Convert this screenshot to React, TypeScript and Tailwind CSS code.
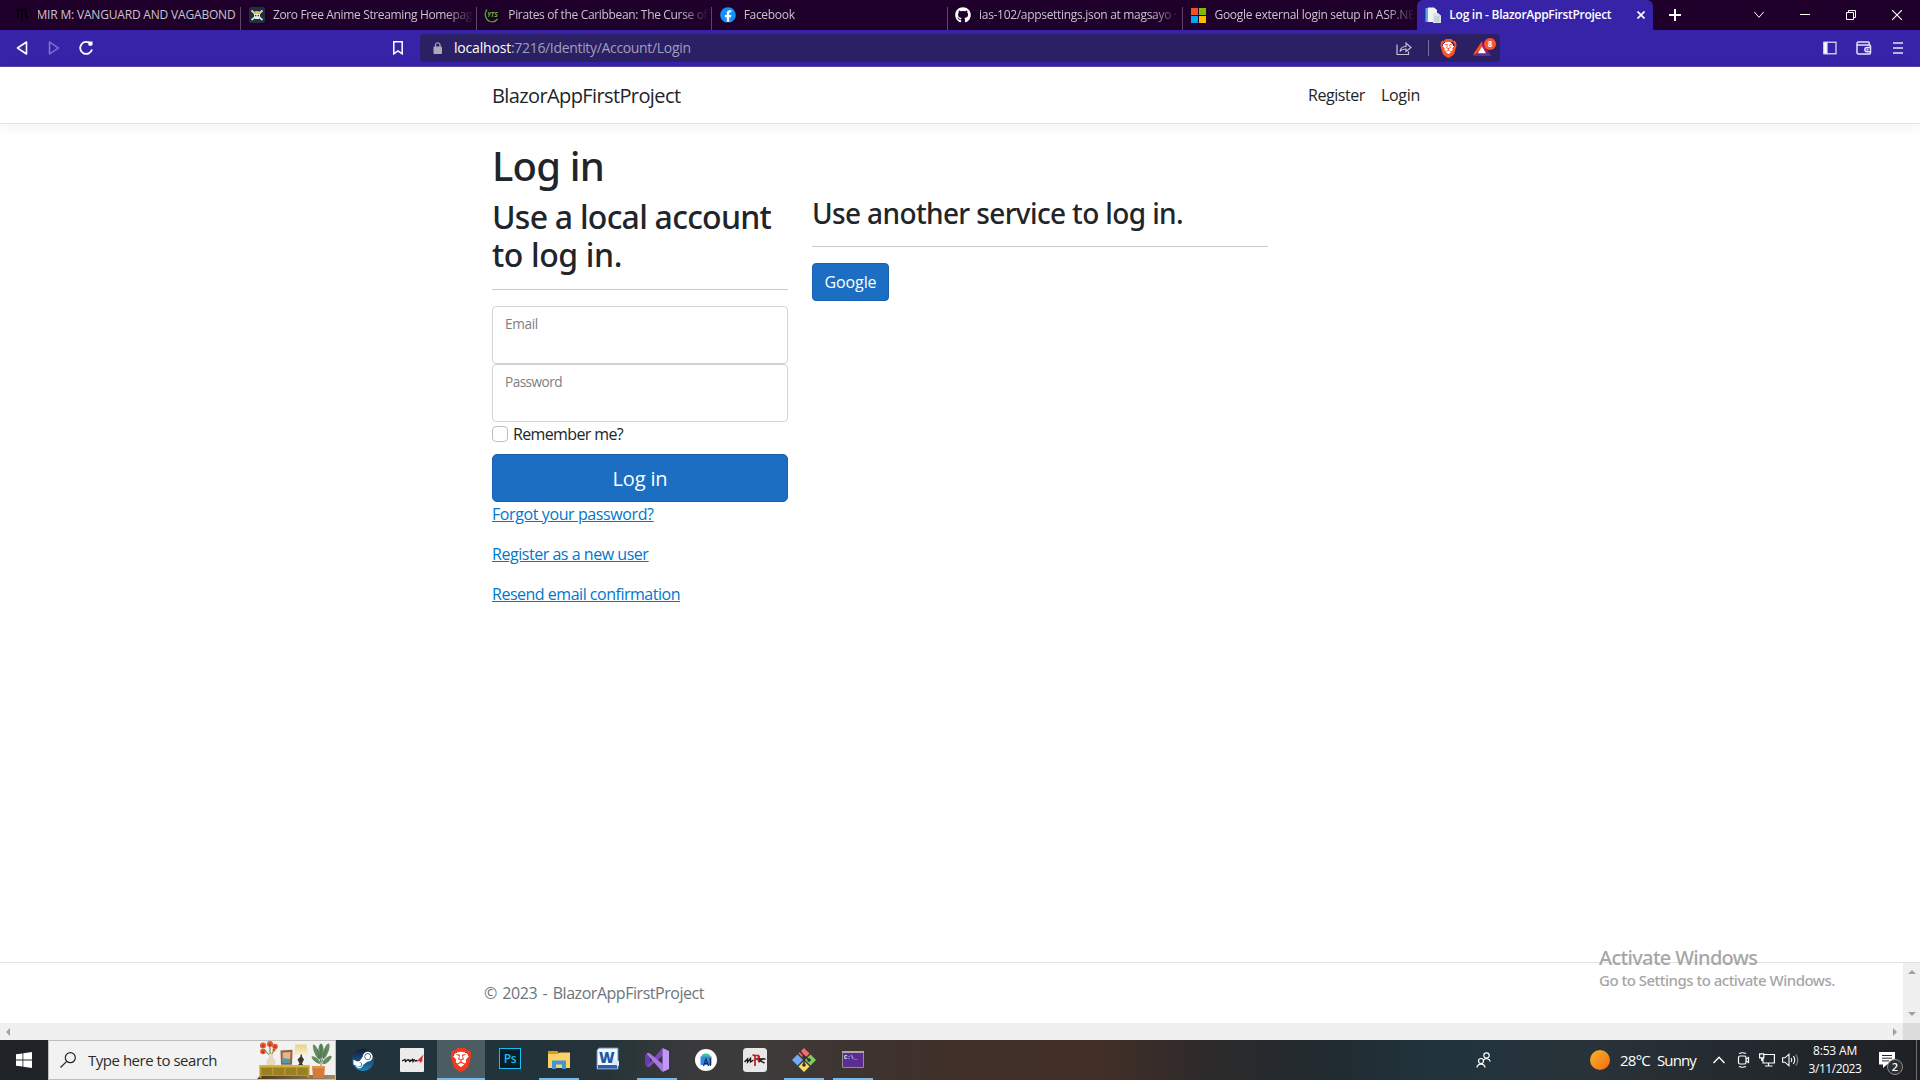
import type { ReactNode } from 'react';
import { FaFacebook, FaGithub, FaSteamSymbol } from 'react-icons/fa';
import { SiBrave } from 'react-icons/si';

const fade = '[mask-image:linear-gradient(to_right,black_86%,transparent)]';

function Tab({ icon, title, track, faded = true }: { icon: ReactNode; title: string; track: string; faded?: boolean }) {
  return (
    <div className="flex h-full w-[235.4px] shrink-0 items-center border-r border-transparent">
      <div className="flex h-4 w-4 shrink-0 items-center justify-center ml-[7.5px]">{icon}</div>
      <div className={`ml-2 w-[201px] overflow-hidden whitespace-nowrap text-[12px] leading-[18px] text-[#c9c2cb] ${track} ${faded ? fade : ''}`}>
        {title}
      </div>
    </div>
  );
}

function TabDivider() {
  return <div className="-ml-px mt-[7px] h-[23px] w-px shrink-0 bg-[#5c4766]" />;
}

function TabBar() {
  return (
    <div className="flex h-[30px] shrink-0 bg-[#1e002a] pl-[6px]">
      <Tab
        faded={false}
        track="tracking-[-0.0153em] -indent-px"
        title="MIR M: VANGUARD AND VAGABOND"
        icon={
          <svg viewBox="0 0 16 16" className="h-4 w-4" fill="none" stroke="#08000c" strokeWidth="2">
            <path d="M2.500 2.500c1 0 1.500 .5 1.500 1.500v7M4 4c1-2 4-2 4 0v10M8 4c1-2 4-2 4 0v6l2 1" />
          </svg>
        }
      />
      <TabDivider />
      <Tab
        track="tracking-[-0.0296em]"
        title="Zoro Free Anime Streaming Homepage"
        icon={
          <svg viewBox="0 0 16 16" className="h-4 w-4">
            <rect width="16" height="16" rx="2.500" fill="#1f3040" />
            <path d="M2.500 3.500l11 9.500M13.500 3.500l-11 9.500" stroke="#d9dde0" strokeWidth="1.700" />
            <path d="M5 7h6v3l-1 2H6l-1-2z" fill="#e8e8e4" />
            <path d="M3.800 7q.7-3 4.200-3t4.200 3z" fill="#e3c43a" />
            <path d="M6 8h1.300v1.300H6zM8.700 8H10v1.300H8.700z" fill="#1f3040" />
          </svg>
        }
      />
      <TabDivider />
      <Tab
        track="tracking-[-0.0283em]"
        title="Pirates of the Caribbean: The Curse of the"
        icon={
          <svg viewBox="0 0 16 16" className="h-4 w-4" fill="none">
            <path d="M3 2.500C0 6 1 12.500 6 14.500c3 1 6-.5 7.500-2.500" stroke="#5aa02c" strokeWidth="1.300" />
            <text x="3.200" y="10" fontSize="6.500" fontStyle="italic" fontWeight="700" fill="#6ab232" fontFamily="Open Sans, sans-serif">YTS</text>
          </svg>
        }
      />
      <TabDivider />
      <Tab
        track="tracking-[-0.0254em]"
        title="Facebook"
        icon={
          <span className="flex h-4 w-4 items-center justify-center rounded-full bg-[radial-gradient(white_60%,transparent_61%)]">
            <FaFacebook className="h-4 w-4 text-[#1590f5]" />
          </span>
        }
      />
      <TabDivider />
      <Tab track="tracking-[-0.0258em]" title="ias-102/appsettings.json at magsayo · " icon={<FaGithub className="h-4 w-4 text-white" />} />
      <TabDivider />
      <Tab
        track="tracking-[-0.0231em]"
        title="Google external login setup in ASP.NET"
        icon={
          <div className="grid h-[15px] w-[15px] grid-cols-2 gap-px">
            <div className="bg-[#f25022]" />
            <div className="bg-[#7fba00]" />
            <div className="bg-[#00a4ef]" />
            <div className="bg-[#ffb900]" />
          </div>
        }
      />
      <div className="-ml-px flex h-full w-[236px] shrink-0 items-center rounded-t-md bg-[#3623a8]">
        <svg viewBox="0 0 16 16" className="ml-[8px] h-4 w-4">
          <path d="M.5 1h4v14h-4z" fill="#4fb0d8" />
          <path d="M3 .500h6l3 2.500v12H3z" fill="#eef4f6" />
          <path d="M8 6h5l3 2.500V16H8z" fill="#d9e2e6" />
          <path d="M9.500 10h5M9.500 12h5M9.500 14h5" stroke="#a3b1b9" strokeWidth=".7" />
        </svg>
        <div className="ml-2 w-[186px] whitespace-nowrap text-[12px] font-semibold leading-[18px] tracking-[-0.0233em] text-white">
          Log in - BlazorAppFirstProject
        </div>
        <svg viewBox="0 0 8 8" className="ml-[2px] h-2 w-2" stroke="white" strokeWidth="1.700">
          <path d="M.5.5l7 7M7.500.5l-7 7" />
        </svg>
      </div>
      <div className="flex flex-1 items-center justify-between">
        <svg viewBox="0 0 12 12" className="ml-[16px] h-3 w-3" stroke="white" strokeWidth="2">
          <path d="M6 0v12M0 6h12" />
        </svg>
        <div className="flex items-center gap-[36px] pr-[18px]">
          <svg viewBox="0 0 10 10" className="h-[10px] w-[10px]" fill="none" stroke="white">
            <path d="M.2 1.800L5 7.300l4.800-5.500" />
          </svg>
          <svg viewBox="0 0 10 10" className="h-[10px] w-[10px]" stroke="white">
            <path d="M0 4.500h10" />
          </svg>
          <svg viewBox="0 0 10 10" className="h-[10px] w-[10px]" fill="none" stroke="white">
            <path d="M.5 2.500h7v7h-7zM2.500 2.500v-2h7v7h-2" />
          </svg>
          <svg viewBox="0 0 10 10" className="h-[10px] w-[10px]" stroke="white" strokeWidth="1.100">
            <path d="M0 0l10 10M10 0L0 10" />
          </svg>
        </div>
      </div>
    </div>
  );
}

function Toolbar() {
  return (
    <div className="flex h-[37px] shrink-0 items-center border-b border-[#5b3fae] bg-[#3623a8]">
      <svg viewBox="0 0 12 16" className="ml-[16px] h-4 w-3" fill="none" stroke="white" strokeWidth="1.600" strokeLinejoin="round">
        <path d="M10.500 2v12L1.500 8z" />
      </svg>
      <svg viewBox="0 0 12 16" className="ml-[20px] h-4 w-3" fill="none" stroke="#8478cb" strokeWidth="1.500" strokeLinejoin="round">
        <path d="M1.500 2v12l9-6z" />
      </svg>
      <svg viewBox="0 0 16 16" className="ml-[18px] h-4 w-4" fill="none" stroke="white" strokeWidth="1.800">
        <path d="M12.500 3.700A6 6 0 1 0 14 9.500" />
        <path d="M10 1.500h4.500v4z" fill="white" stroke="none" />
        <circle cx="12.200" cy="4" r="2" fill="white" stroke="none" />
      </svg>
      <svg viewBox="0 0 10 14" className="ml-[299px] h-[14px] w-[10px]" fill="none" stroke="white" strokeWidth="1.500">
        <path d="M.8.800h8.400v12L5 9.800.8 12.800z" />
      </svg>
      <div className="ml-[17px] flex h-7 w-[1080px] items-center rounded bg-[#2a2063]">
        <svg viewBox="0 0 10 12" className="ml-[13px] h-3 w-[10px]">
          <rect x=".5" y="4.500" width="8.500" height="7.500" rx="1" fill="#aba9b8" />
          <path d="M2.500 5V3a2.250 2.250 0 0 1 4.500 0v2" fill="none" stroke="#aba9b8" strokeWidth="1.200" />
        </svg>
        <div className="ml-[11px] flex-1 whitespace-nowrap text-[14px] leading-5">
          <span className="tracking-[-0.0131em] text-white">localhost</span>
          <span className="tracking-[-0.0235em] text-[#a19dbb]">:7216/Identity/Account/Login</span>
        </div>
        <svg viewBox="0 0 16 14" className="h-[14px] w-4" fill="none" stroke="#c4c1d4" strokeWidth="1.200">
          <path d="M1 3.500v10h11.500V10.500M4 10.500c.5-3.500 2.500-5 6-5V2l5 4.500-5 4V8c-3 0-4.500.5-6 2.500z" />
        </svg>
        <div className="ml-[16px] h-4 w-px bg-[#77729c]" />
        <div className="ml-[11px] flex h-[18px] w-4 items-center justify-center bg-[radial-gradient(white_50%,transparent_51%)]">
          <SiBrave className="h-[19px] w-[19px] shrink-0 text-[#fb542b]" />
        </div>
        <div className="relative ml-[17px] mr-[9px] h-[18px] w-[18px]">
          <svg viewBox="0 0 18 18" className="h-[18px] w-[18px]">
            <path d="M9 2v8l-3.500 5.500H0z" fill="#ff4724" />
            <path d="M9 2l9 15-5-1.500L9 9z" fill="#9e1f63" />
            <path d="M0 17l4.500-3.500h9L18 17z" fill="#662d91" />
            <path d="M9 7.500l4 6.800H5z" fill="#fff" />
          </svg>
          <span className="absolute -top-[1px] left-[11px] flex h-3 w-3 items-center justify-center rounded-full bg-[#fb542b] text-[8px] font-bold leading-none text-white">8</span>
        </div>
      </div>
      <div className="flex flex-1 items-center justify-end pr-[17px]">
        <svg viewBox="0 0 14 14" className="h-[14px] w-[14px]" fill="none" stroke="#e6e3f5" strokeWidth="1.200">
          <rect x="1" y="1.200" width="12" height="11.600" />
          <path d="M1 1.500h3v11H1z" fill="white" />
        </svg>
        <svg viewBox="0 0 16 14" className="ml-[19px] h-[14px] w-4" fill="none" stroke="#e6e3f5" strokeWidth="1.500">
          <path d="M13.200 3.500V2a1 1 0 0 0-1-1H2.500A1.500 1.500 0 0 0 1 2.500v8.800A1.500 1.500 0 0 0 2.500 13h11a1 1 0 0 0 1-1V5a1 1 0 0 0-1-1H1.500" />
          <path d="M14.500 6.500h-3.500a2 2 0 0 0 0 4.200h3.500" />
          <circle cx="11.500" cy="8.600" r=".4" fill="#fff" />
        </svg>
        <svg viewBox="0 0 10 14" className="ml-[21px] h-[14px] w-[10px]" stroke="#e6e3f5" strokeWidth="1.600">
          <path d="M0 2h10M0 7h10M0 12h10" />
        </svg>
      </div>
    </div>
  );
}

function Field({ label, track }: { label: string; track: string }) {
  return (
    <div className="h-[58px] rounded border border-[#ced4da] bg-white px-3 pt-[7px]">
      <span className={`block text-[13.6px] leading-5 text-[#7c8083] ${track}`}>{label}</span>
    </div>
  );
}

function Page() {
  return (
    <div className="flex flex-1 flex-col bg-white text-[#212529]">
      <nav className="flex h-[57px] shrink-0 items-center border-b border-[#dee2e6] pl-[492px] shadow-[0_4px_12px_rgba(0,0,0,0.05)]">
        <span className="pt-[2px] text-[20px] leading-[30px] tracking-[-0.0305em]">BlazorAppFirstProject</span>
        <div className="ml-auto flex gap-4 pr-[500px] text-[16px] leading-6">
          <span className="tracking-[-0.0269em]">Register</span>
          <span className="tracking-[-0.0189em]">Login</span>
        </div>
      </nav>
      <main className="flex-1 pl-[492px] pt-4">
        <h1 className="h-14 pt-[2px] font-['Noto_Sans',sans-serif] text-[40px] font-medium leading-[48px] tracking-[-0.0204em]">Log in</h1>
        <div className="flex gap-6">
          <section className="w-[296px]">
            <h2 className="pt-[2px] font-['Noto_Sans',sans-serif] text-[32px] font-medium leading-[38.4px]">
              <span className="block tracking-[-0.0235em]">Use a local account</span>
              <span className="block tracking-[-0.0122em]">to log in.</span>
            </h2>
            <hr className="mb-4 mt-[14px] border-[#c8c9ca]" />
            <Field label="Email" track="tracking-[-0.0230em]" />
            <Field label="Password" track="tracking-[-0.0393em]" />
            <div className="flex h-6">
              <span className="mt-1 h-4 w-4 rounded border border-[#bfbfbf]" />
              <span className="ml-[5px] text-[16px] leading-6 tracking-[-0.0398em]">Remember me?</span>
            </div>
            <button className="mt-2 block h-12 w-full rounded-[5px] border border-[#1861ac] bg-[#1b6ec2] pt-[3px] text-[20px] leading-[30px] tracking-[-0.007em] text-white">
              Log in
            </button>
            <div className="flex flex-col gap-4 text-[16px] leading-6 text-[#0077cc] underline">
              <a className="tracking-[-0.0250em]">Forgot your password?</a>
              <a className="tracking-[-0.0290em]">Register as a new user</a>
              <a className="tracking-[-0.0302em]">Resend email confirmation</a>
            </div>
          </section>
          <section className="w-[456px]">
            <h3 className="pt-px font-['Noto_Sans',sans-serif] text-[28px] font-medium leading-[33.6px] tracking-[-0.0225em]">Use another service to log in.</h3>
            <hr className="mb-4 mt-[15px] border-[#c8c9ca]" />
            <button className="block h-[38px] w-[77px] rounded border border-[#1861ac] bg-[#1b6ec2] text-[16px] leading-6 tracking-[-0.0062em] text-white">
              Google
            </button>
          </section>
        </div>
      </main>
      <footer className="flex h-[61px] shrink-0 border-t border-[#dee2e6]">
        <div className="flex-1 pl-[484px] text-[16px] leading-[60px] tracking-[-0.0290em] text-[#6c757d] [word-spacing:1.8px]">© 2023 - BlazorAppFirstProject</div>
        <div className="flex w-[17px] flex-col items-center justify-between bg-[#f0f0f0] py-[7px]">
          <svg viewBox="0 0 8 4" className="h-1 w-2" fill="#a0a0a0"><path d="M4 0l4 4H0z" /></svg>
          <svg viewBox="0 0 8 4" className="h-1 w-2" fill="#a0a0a0"><path d="M4 4l4-4H0z" /></svg>
        </div>
      </footer>
      <div className="flex h-[17px] shrink-0 items-center bg-[#f0f0f0]">
        <svg viewBox="0 0 4 8" className="ml-[6px] h-2 w-1" fill="#a0a0a0"><path d="M0 4l4-4v8z" /></svg>
        <svg viewBox="0 0 4 8" className="ml-auto mr-[6px] h-2 w-1" fill="#a0a0a0"><path d="M4 4L0 0v8z" /></svg>
        <div className="h-full w-[17px] bg-[#dcdcdc]" />
      </div>
    </div>
  );
}

function TaskButton({ children, open = false, active = false }: { children?: ReactNode; open?: boolean; active?: boolean }) {
  return (
    <div className={`flex h-10 w-12 shrink-0 flex-col items-center ${active ? 'bg-[#4c5c63]' : ''}`}>
      <div className="flex h-[38px] items-center justify-center pt-[2px]">{children}</div>
      <div className={`h-[2px] ${active ? 'w-12 bg-[#76b9ed]' : open ? 'w-10 bg-[#76b9ed]' : 'w-0'}`} />
    </div>
  );
}

function SearchArt() {
  return (
    <svg viewBox="0 0 78 38" className="h-[38px] w-[78px]">
      <defs>
        <linearGradient id="floor" x1="0" x2="1">
          <stop offset="0" stopColor="#4d3716" />
          <stop offset="1" stopColor="#a58a68" />
        </linearGradient>
        <linearGradient id="shade" x1="0" x2="0" y1="0" y2="1">
          <stop offset="0" stopColor="#e8cf8c" />
          <stop offset="1" stopColor="#faf0cc" />
        </linearGradient>
      </defs>
      <path d="M0 38l4-4h74v4z" fill="url(#floor)" />
      <path d="M12 14l-5-6M13 14V5M14 14l4-6" stroke="#4f7a3d" strokeWidth="1" />
      <g fill="#e4572a">
        <circle cx="6" cy="4.500" r="3" />
        <circle cx="13" cy="3" r="3" />
        <circle cx="18" cy="5.500" r="2.800" />
        <circle cx="6" cy="10.500" r="2.800" />
        <circle cx="17" cy="9" r="1.600" />
      </g>
      <g fill="#a6341a">
        <circle cx="6" cy="5" r="1" />
        <circle cx="13" cy="4" r="1" />
        <circle cx="18" cy="6" r="1" />
        <circle cx="6" cy="11" r="1" />
      </g>
      <path d="M11.500 13h5l-.5 4c4 2 2.500 6 1.500 7h-7c-1-1-2.500-5 1.500-7z" fill="#e6d9bd" />
      <path d="M23.500 9.500l12-.7-.5 15H24z" fill="#94623a" />
      <path d="M25.500 11.500l8-.5-.5 11h-7.200z" fill="#e8b48c" />
      <path d="M25.700 17l7.500 1-.2 4h-7.200z" fill="#4a9cbd" />
      <path d="M38.500 3.500h11l1.500 10H37z" fill="url(#shade)" />
      <path d="M43.500 13.500H45v2l2 3-2 4 1.500 2h-6l2-2-2-4 3-3z" fill="#41362a" />
      <path d="M2.500 24h50v13h-2v-2h-46v2h-2z" fill="#b7972b" />
      <path d="M2.500 24h50v2h-50z" fill="#d0b543" />
      <path d="M4.500 27h10.500v7H4.500zM16.500 27H27v7H16.500zM28.500 27H39v7H28.500zM40.500 27h10v7h-10z" fill="#9b8022" />
      <g fill="#668b61">
        <ellipse cx="64" cy="10" rx="2.700" ry="7.500" />
        <ellipse cx="59.500" cy="11" rx="2.300" ry="8" transform="rotate(-22 59.500 11)" />
        <ellipse cx="69" cy="10" rx="2.500" ry="8" transform="rotate(20 69 10)" />
        <ellipse cx="59" cy="19" rx="2" ry="5.500" transform="rotate(-50 59 19)" />
        <ellipse cx="70" cy="19" rx="2.200" ry="6" transform="rotate(48 70 19)" />
      </g>
      <path d="M64 4v21M60 8l4 13M69 8l-4 13" stroke="#3f6346" strokeWidth=".7" />
      <path d="M55 25h13l-1 12H56z" fill="#d97837" />
      <path d="M55 25h13v2.500H55z" fill="#e6914d" />
    </svg>
  );
}

function Taskbar() {
  return (
    <div className="flex h-10 shrink-0 bg-[linear-gradient(90deg,#1f2126_0px,#21333b_336px,#21333b_520px,#263438_610px,#38393b_680px,#3e3c3c_760px,#3d3430_850px,#40302a_940px,#432f28_1100px,#2c2a2b_1210px,#222b30_1320px,#20343d_1450px,#293339_1580px,#23282d_1780px,#1e2024_1920px)] text-white">
      <div className="flex w-12 items-center justify-center bg-[#1f2227]">
        <svg viewBox="0 0 16 16" className="h-4 w-4" fill="white">
          <path d="M0 2.300l6.500-.9v6.200H0zM7.300 1.300L16 0v7.600H7.300zM0 8.400h6.500v6.200L0 13.700zM7.300 8.400H16V16l-8.700-1.300z" />
        </svg>
      </div>
      <div className="flex w-72 items-center border border-[#bdbdbd] bg-[#f2f2f2]">
        <svg viewBox="0 0 16 16" className="ml-[11px] h-4 w-4" fill="none" stroke="#222" strokeWidth="1.200">
          <circle cx="10.300" cy="5.700" r="5" />
          <path d="M6.700 9.300L.5 15.500" />
        </svg>
        <span className="ml-[12px] whitespace-nowrap text-[15px] leading-5 tracking-[-0.0317em] text-[#2b2b2b]">Type here to search</span>
        <div className="ml-auto"><SearchArt /></div>
      </div>
      <div className="ml-[3px] flex gap-px">
        <TaskButton>
          <div className="-ml-px flex h-[22px] w-[22px] items-center justify-center overflow-hidden rounded-full bg-linear-to-b from-[#111d3c] to-[#1b82b8]">
            <FaSteamSymbol className="h-[22px] w-[22px] text-white" />
          </div>
        </TaskButton>
        <TaskButton>
          <svg viewBox="0 0 24 24" className="h-6 w-6">
            <rect width="24" height="24" rx="1" fill="#ececec" />
            <path d="M2 13l3-1.500.5 2L8 11.500l2 2M10 11.500v2l2.500-2 .5 2 1.500-2.500M14.500 13l3-.5" fill="none" stroke="#181818" strokeWidth="1.300" />
            <path d="M20.500 14.500L22 9l-3.500 3.500H22.500" fill="none" stroke="#e02b2b" strokeWidth="1.500" />
          </svg>
        </TaskButton>
        <TaskButton active>
          <div className="flex h-6 w-6 items-center justify-center bg-[radial-gradient(white_50%,transparent_51%)]">
            <SiBrave className="h-6 w-6 shrink-0 text-[#f8381c]" />
          </div>
        </TaskButton>
        <TaskButton>
          <div className="-mt-[3px] flex h-[21px] w-[22px] items-center justify-center border border-[#18bdf2] bg-[#061e26] text-[12px] font-semibold leading-none tracking-tight text-[#18bdf2]">Ps</div>
        </TaskButton>
        <TaskButton open>
          <svg viewBox="0 0 22 20" className="h-5 w-[22px]">
            <path d="M0 1h9.500L11 3.500V8H0z" fill="#dd9a17" />
            <path d="M0 4h10l1.500-1.500H22V18H0z" fill="#fbd265" />
            <path d="M4 19v-7.500a1 1 0 0 1 1-1h12a1 1 0 0 1 1 1V19h-4v-4.500H8V19z" fill="#3f95d6" />
          </svg>
        </TaskButton>
        <TaskButton>
          <svg viewBox="0 0 24 24" className="-mt-[2px] h-6 w-6">
            <path d="M3 1h19v21H1V3z" fill="#f4f7fc" />
            <path d="M3 1h19v21H1V3z" fill="none" stroke="#5f8bc9" />
            <path d="M2 18h19v3.500H2z" fill="#2b5fad" />
            <path d="M14 12l9 2v5l-8-2z" fill="#dbe7f7" />
            <text x="3" y="16" fontSize="15" fontWeight="800" fill="#1f57a8" fontFamily="Open Sans, sans-serif">W</text>
          </svg>
        </TaskButton>
        <TaskButton open>
          <svg viewBox="0 0 24 24" className="h-6 w-6">
            <path d="M0 7l2.500-1.500L5 8v8l-2.500 2.500L0 17z" fill="#6b3bab" />
            <path d="M1.500 18.300L17.500 0v8L5 18.500a2.500 2.500 0 0 1-3.500-.2z" fill="#7b49c2" />
            <path d="M1.500 5.700A2.500 2.500 0 0 1 5 5.500L17.500 16v8z" fill="#a877e4" />
            <path d="M17.500 0L24 3v18l-6.500 3z" fill="#c397f7" />
          </svg>
        </TaskButton>
        <TaskButton>
          <svg viewBox="0 0 22 22" className="h-[22px] w-[22px]">
            <circle cx="11" cy="11" r="11" fill="#fdfdfd" />
            <path d="M6.500 8a4.500 3.500 0 0 1 9 0z" fill="#36c98e" />
            <path d="M5.500 7.500h11v8.500h-11z" fill="#3b87e8" />
            <path d="M8.500 17l2.500-7 2.500 7M9.500 14.500h3.200M15.300 9v8" fill="none" stroke="#142c4a" strokeWidth="1.200" />
          </svg>
        </TaskButton>
        <TaskButton>
          <svg viewBox="0 0 24 24" className="h-6 w-6">
            <rect width="24" height="24" rx="3.500" fill="#e8e8e8" />
            <path d="M1.500 14l3-3v3l3-3.500V14l3-2M16 8v6.500M22.500 11H12.500M20.500 10.500l-4 2 5 2.500" fill="none" stroke="#1b1b1b" strokeWidth="1.400" />
            <path d="M9.500 7.500c1.500-1 2.500 0 2.500 1v9.500M12 7.500h3.500v5.500" fill="none" stroke="#c8161e" strokeWidth="1.700" />
          </svg>
        </TaskButton>
        <TaskButton open>
          <svg viewBox="0 0 24 24" className="h-6 w-6">
            <path d="M12 0l5.500 5.500-5.500 5.500L6.500 5.500z" fill="#f26d6d" />
            <path d="M5.500 6.500L11 12l-5.500 5.500L0 12z" fill="#71aaf5" />
            <path d="M18.500 6.500L24 12l-5.500 5.500L13 12z" fill="#80cc56" />
            <path d="M12 13l5.500 5.500L12 24l-5.500-5.500z" fill="#fbdc66" />
            <path d="M8 3l4 5v10M12 8l6 4.500" fill="none" stroke="#33302f" strokeWidth="1.400" />
            <circle cx="12" cy="9" r="1.800" fill="#33302f" />
            <circle cx="12" cy="17" r="1.800" fill="#33302f" />
            <circle cx="17" cy="12" r="1.800" fill="#33302f" />
          </svg>
        </TaskButton>
        <TaskButton open>
          <svg viewBox="0 0 22 18" className="h-[18px] w-[22px]">
            <path d="M.5.500h21v16H.5z" fill="#5c2d91" stroke="#8d8d8d" />
            <path d="M0 0h22v2H0z" fill="#a8a8a8" />
            <text x="2" y="8" fontSize="5.500" fontWeight="700" fill="#eee" fontFamily="Liberation Mono, monospace">C:\_</text>
          </svg>
        </TaskButton>
      </div>
      <div className="ml-auto flex items-center">
        <svg viewBox="0 0 15 16" className="h-4 w-[15px]" fill="none" stroke="white" strokeWidth="1.200">
          <circle cx="10.500" cy="3.500" r="2.700" />
          <path d="M7.500 8a4 4 0 0 1 6.800 1.500" />
          <circle cx="5" cy="9" r="2.500" />
          <path d="M.8 15.500a4.300 4.300 0 0 1 8.400 0" />
        </svg>
        <div className="ml-[99px] h-5 w-5 rounded-full bg-linear-to-br from-[#f8b72c] to-[#f0660e]" />
        <span className="ml-[10px] w-[30px] whitespace-nowrap text-[15px] leading-5 tracking-[-0.0505em]">28°C</span>
        <span className="ml-[7px] w-[40px] whitespace-nowrap text-[15px] leading-5 tracking-[-0.0579em]">Sunny</span>
        <svg viewBox="0 0 12 8" className="ml-[16px] h-2 w-3" fill="none" stroke="white" strokeWidth="1.400">
          <path d="M.5 7L6 1.300 11.500 7" />
        </svg>
        <svg viewBox="0 0 13 16" className="ml-[12px] h-4 w-[13px]" fill="none" stroke="white" strokeWidth="1.200">
          <rect x="1.500" y="4" width="7.500" height="8" rx="1.500" />
          <path d="M9 7l2.500-1.500v5L9 9M2 1.500Q5.500 0 9 1.500M2 14.500q3.500 1.500 7 0" />
        </svg>
        <svg viewBox="0 0 16 14" className="ml-[9px] h-[14px] w-4" fill="none" stroke="white" strokeWidth="1.200">
          <path d="M5 1.500h10.400v8.500H4V5.500M9.500 10v3M6 13h7.500M.6.800h4.200v4H.6zM2.700 5v3" />
        </svg>
        <svg viewBox="0 0 17 14" className="ml-[7px] h-[14px] w-[17px]" fill="none" stroke="white" strokeWidth="1.100">
          <path d="M.6 4.800H3l4-3.600v11.600L3 9.200H.6zM9 5q1.500 2 0 4M11.300 3.200q3 3.800 0 7.600" />
          <path d="M13.800 1.500q4 5.500 0 11" stroke="#8a8d90" />
        </svg>
        <div className="ml-[8px] flex w-[56px] flex-col items-center whitespace-nowrap text-[12px] leading-[18px]">
          <span className="tracking-[-0.0147em]">8:53 AM</span>
          <span className="tracking-[-0.0356em]">3/11/2023</span>
        </div>
        <div className="relative ml-[16px] h-6 w-[24px]">
          <svg viewBox="0 0 16 16" className="mt-[4px] h-4 w-4">
            <path d="M0 0h16v12.500H8L4 16v-3.500H0z" fill="white" />
            <path d="M3 3.500h10M3 6.200h10M3 8.900h7" stroke="#23262b" />
          </svg>
          <span className="absolute left-[8px] top-[10.500px] flex h-4 w-4 items-center justify-center rounded-full border border-[#8c8e90] bg-[#2d2f33] text-[11px] font-semibold leading-none">2</span>
        </div>
        <div className="ml-[13px] mr-[3px] h-10 w-px bg-[#6c6e71]" />
      </div>
    </div>
  );
}

export default function App() {
  return (
    <div className="relative flex h-[1080px] w-[1920px] flex-col overflow-hidden bg-white font-['Open_Sans',sans-serif]">
      <TabBar />
      <Toolbar />
      <Page />
      <Taskbar />
      <div className="absolute left-[1599px] top-[944px] whitespace-nowrap font-['Noto_Sans',sans-serif] text-[#a6a6a6]">
        <div className="text-[20px] font-medium leading-7 tracking-[-0.034em]">Activate Windows</div>
        <div className="-mt-[2px] text-[15px] font-medium leading-5 tracking-[-0.034em]">Go to Settings to activate Windows.</div>
      </div>
    </div>
  );
}
